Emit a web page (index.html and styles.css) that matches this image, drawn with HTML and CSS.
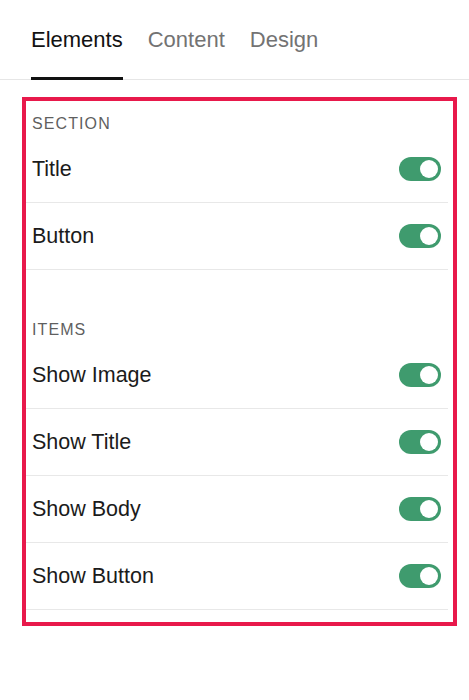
FILE: index.html
```html
<!DOCTYPE html>
<html lang="en">
<head>
  <meta charset="UTF-8" />
  <meta name="viewport" content="width=device-width, initial-scale=1.0"/>
  <title>Elements</title>
  <link rel="stylesheet" href="styles.css">
</head>
<body>
  <nav class="tabs">
    <span class="tab active">Elements</span>
    <span class="tab">Content</span>
    <span class="tab">Design</span>
  </nav>

  <div class="panel">
    <div class="group">
      <p class="label">SECTION</p>
      <ul class="rows">
        <li class="row"><span>Title</span><span class="toggle on"></span></li>
        <li class="row"><span>Button</span><span class="toggle on"></span></li>
      </ul>
    </div>

    <div class="group">
      <p class="label">ITEMS</p>
      <ul class="rows">
        <li class="row"><span>Show Image</span><span class="toggle on"></span></li>
        <li class="row"><span>Show Title</span><span class="toggle on"></span></li>
        <li class="row"><span>Show Body</span><span class="toggle on"></span></li>
        <li class="row"><span>Show Button</span><span class="toggle on"></span></li>
      </ul>
    </div>
  </div>
</body>
</html>
```

FILE: styles.css
```css
body {
  margin: 0;
  font-family: 'Liberation Sans', Arial, sans-serif;
  background: #fff;
  color: #1b1b1b;
}

.tabs {
  display: flex;
  gap: 25px;
  height: 79px;
  padding: 0 31px;
  border-bottom: 1px solid #e6e6e6;
}

.tab {
  font-size: 22px;
  line-height: 24px;
  color: #737373;
  padding: 28px 0 25px;
  height: 24px;
  border-bottom: 3px solid transparent;
}

.tab.active {
  color: #121212;
  border-bottom-color: #111;
}

.panel {
  margin: 17px 12px 0 22px;
  border: 4px solid #e8194b;
  padding-bottom: 12px;
}

.group + .group {
  margin-top: 37px;
}

.label {
  margin: 0;
  padding: 13px 6px 2px;
  font-size: 16px;
  line-height: 20px;
  letter-spacing: 1.1px;
  color: #5f5f5f;
}

.rows {
  list-style: none;
  margin: 0 5px 0 0;
  padding: 0;
}

.row {
  display: flex;
  align-items: center;
  justify-content: space-between;
  height: 66px;
  padding: 0 7px 0 6px;
  font-size: 21.5px;
  border-bottom: 1px solid #e8e8e8;
}

.toggle {
  position: relative;
  width: 42px;
  height: 24px;
  border-radius: 12px;
  background: #c9c9c9;
}

.toggle::after {
  content: "";
  position: absolute;
  top: 3px;
  left: 3px;
  width: 18px;
  height: 18px;
  border-radius: 50%;
  background: #fff;
}

.toggle.on {
  background: #3f9b6e;
}

.toggle.on::after {
  left: 21px;
}
```
